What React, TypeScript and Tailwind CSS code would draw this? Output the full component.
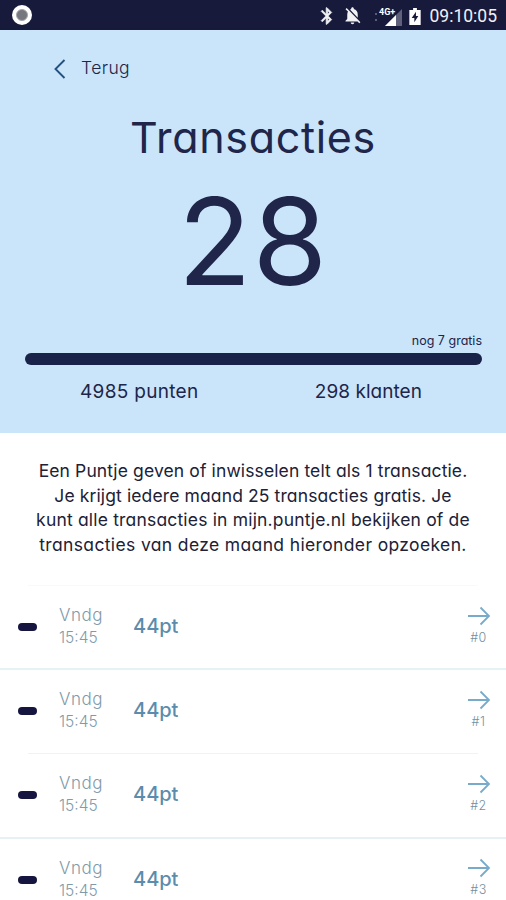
import React from "react";

const transactions = [
  { id: 0, day: "Vndg", time: "15:45", points: 44 },
  { id: 1, day: "Vndg", time: "15:45", points: 44 },
  { id: 2, day: "Vndg", time: "15:45", points: 44 },
  { id: 3, day: "Vndg", time: "15:45", points: 44 },
];

function StatusBar() {
  return (
    <div className="flex h-[30px] items-center justify-between bg-[#171a3a] pl-3 pr-[9px] text-white">
      <div className="flex h-5 w-5 items-center justify-center rounded-full bg-white">
        <div className="h-3 w-3 rounded-full border border-[#a5a5ad] bg-[#77777f]" />
      </div>
      <div className="flex items-center text-[#f1f1f4]">
        <svg viewBox="0 0 24 24" fill="currentColor" stroke="currentColor" strokeWidth="0.800" className="mr-[5px] mt-0.5 h-[20px] w-[20px]">
          <path d="M17.71 7.71L12 2h-1v7.59L6.41 5 5 6.41 10.59 12 5 17.59 6.41 19 11 14.41V22h1l5.71-5.71-4.3-4.29 4.3-4.29zM13 5.83l1.88 1.88L13 9.59V5.83zm1.88 10.46L13 18.17v-3.76l1.88 1.88z" />
        </svg>
        <svg viewBox="0 0 24 24" fill="currentColor" className="mt-px h-[21px] w-[21px]">
          <path d="M20 18.69L7.84 6.14 5.27 3.49 4 4.76l2.8 2.8v.01c-.52.99-.8 2.16-.8 3.42v5l-2 2v1h13.73l2 2L21 19.72l-1-1.03zM12 22c1.11 0 2-.89 2-2h-4c0 1.11.89 2 2 2zm6-7.32V11c0-3.08-1.64-5.64-4.5-6.32V4c0-.83-.67-1.5-1.5-1.5s-1.5.67-1.5 1.5v.68c-.15.03-.29.08-.42.12-.1.03-.2.07-.3.11h-.01c-.01 0-.01 0-.02.01-.23.09-.46.2-.68.31 0 0-.01 0-.01.01L18 14.68z" />
        </svg>
        <svg viewBox="0 0 32 22" className="ml-[10px] h-[22px] w-8">
          <path d="M2 9h2v2H2zM2 15h2v2H2z" fill="#5b5d76" />
          <path d="M29 5v17H12z" fill="#5f6079" />
          <path d="M23 11v11H12z" fill="#fff" />
          <text x="6" y="10.500" fontSize="9" fontWeight="700" fill="#fff" className="font-['Roboto',sans-serif]">
            4G+
          </text>
        </svg>
        <svg viewBox="0 0 12 18" className="ml-[4px] mt-0.5 h-[17px] w-3">
          <path d="M4 0h4v2h4v16H0V2h4z" fill="#fff" />
          <path d="M7 4L2.500 10.500H5.300V15L9.500 8.500H7z" fill="#171a3a" />
        </svg>
        <span className="ml-[9px] mt-0.5 font-['Roboto',sans-serif] text-[17.500px] leading-5">09:10:05</span>
      </div>
    </div>
  );
}

function TransactionRow({ id, day, time, points }: (typeof transactions)[number]) {
  return (
    <li className="relative flex h-[84.200px] items-start">
      <div className="ml-[18px] mt-[37px] h-2 w-[19px] rounded-full bg-[#15153f]" />
      <div className="ml-[22px] w-[74px] pt-[18px] text-[#7f9baa]">
        <p className="text-[17px] font-light leading-[23px] tracking-[0.500px]">{day}</p>
        <p className="text-[15.500px] font-light leading-[22px]">{time}</p>
      </div>
      <p className="pt-[26px] text-[20px] font-medium leading-7 text-[#5b8cad]">{points}pt</p>
      <div className="ml-auto mr-[14px] flex w-[27px] flex-col items-center pt-[19.500px]">
        <svg viewBox="0 0 24 20" fill="none" stroke="#78aaca" strokeWidth="1.800" className="h-5 w-6">
          <path d="M1 10h21M13.500 1.500L22 10l-8.500 8.500" />
        </svg>
        <p className="text-[12.500px] font-light leading-[23px] tracking-[0.500px] text-[#71909f]">#{id}</p>
      </div>
      {id % 2 === 0 ? (
        <div className="absolute inset-x-0 bottom-0 h-0.5 bg-[#e6f1f3]" />
      ) : (
        <div className="absolute bottom-0 left-7 right-7 h-px bg-[#f0f3f5]" />
      )}
    </li>
  );
}

export default function App() {
  return (
    <div className="h-[900px] w-[506px] overflow-hidden bg-white font-['Inter',sans-serif] text-[#20254a] [font-feature-settings:'cv11','ss03']">
      <StatusBar />
      <header className="h-[403px] bg-[#cae4f9]">
        <button className="flex h-[76px] items-center pl-[53px] text-[17.500px] font-light">
          <svg viewBox="0 0 14 20" fill="none" stroke="#235181" strokeWidth="1.900" className="mt-[2px] h-5 w-[14px]">
            <path d="M11.500 1L2.500 10l9 9" />
          </svg>
          <span className="ml-[14px] tracking-[0.400px]">Terug</span>
        </button>
        <h1 className="text-center text-[43px] font-normal leading-[63px] tracking-[0.700px]">Transacties</h1>
        <p className="mt-[10px] text-center text-[121px] font-normal leading-[125px] tracking-[1px]">28</p>
        <div className="ml-[25px] mr-6 mt-[28px]">
          <p className="text-right text-[12.500px] leading-[18px]">nog 7 gratis</p>
          <div className="mt-[3px] h-3 rounded-full bg-[#19234a]" />
        </div>
        <div className="mt-[13px] flex justify-between pl-[80px] pr-[84px] text-[19px] leading-7">
          <span className="tracking-[0.300px]">4985 punten</span>
          <span className="tracking-[0.050px]">298 klanten</span>
        </div>
      </header>
      <section>
        <p className="whitespace-nowrap pt-[26px] text-center text-[17.500px] leading-[24.500px] tracking-[0.120px] text-[#202137]">
          Een Puntje geven of inwisselen telt als 1 transactie.
          <br />
          Je krijgt iedere maand 25 transacties gratis. Je
          <br />
          <span className="tracking-[0.180px]">kunt alle transacties in mijn.puntje.nl bekijken of de</span>
          <br />
          <span className="tracking-[0.360px]">transacties van deze maand hieronder opzoeken.</span>
        </p>
        <div className="mx-7 mt-[28px] h-px bg-[#f7f9fa]" />
        <ul>
          {transactions.map((t) => (
            <TransactionRow key={t.id} {...t} />
          ))}
        </ul>
      </section>
    </div>
  );
}
